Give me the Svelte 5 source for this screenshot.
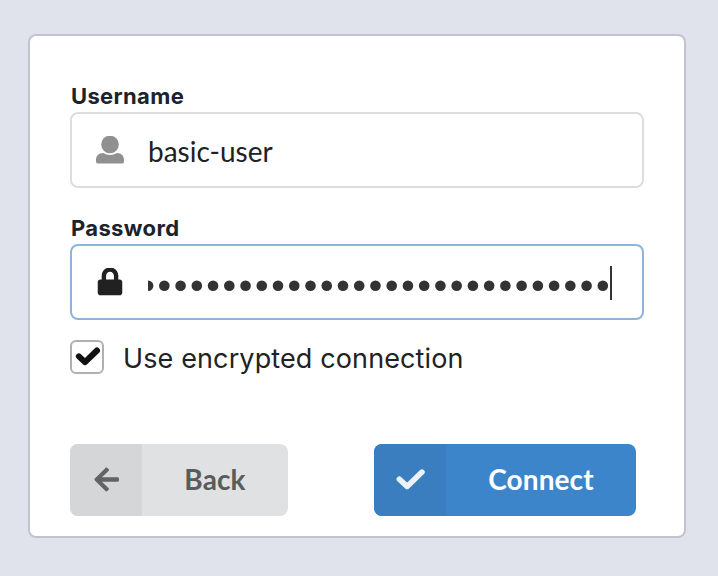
<script>
  const dots = Array.from({ length: 29 }, (_, i) => 0.1 + i * 16.24);
</script>

<main>
  <form class="panel">
    <div class="label"><span>Username</span></div>
    <div class="field">
      <svg class="icon user" viewBox="0 0 28 28" width="28" height="28">
        <circle cx="14" cy="8.5" r="8.8" />
        <path d="M7 17.1Q14 20.8 21 17.1C25.5 17.1 28 20.2 28 24V25.4Q28 27.6 25.8 27.6H2.2Q0 27.6 0 25.4V24C0 20.2 2.5 17.1 7 17.1Z" />
      </svg>
      <span class="value">basic-user</span>
    </div>

    <div class="label second"><span>Password</span></div>
    <div class="field focus">
      <svg class="icon" viewBox="-32 12 512 512" width="28" height="28">
        <path d="M400 224h-24v-72C376 68.2 307.8 0 224 0S72 68.2 72 152v72H48c-26.5 0-48 21.5-48 48v192c0 26.5 21.5 48 48 48h352c26.5 0 48-21.5 48-48V272c0-26.5-21.5-48-48-48zm-104 0H152v-72c0-39.7 32.3-72 72-72s72 32.3 72 72v72z" />
      </svg>
      <svg class="dots" width="462" height="34">
        {#each dots as x}
          <circle cx={x} cy="19.7" r="5.3" />
        {/each}
      </svg>
      <span class="caret"></span>
    </div>

    <div class="check-row">
      <span class="box">
        <svg class="tick" viewBox="0 0 30 30" width="30" height="30">
          <path d="M6.9 14.4L13 20.2L25 8.5" stroke-width="6" />
        </svg>
      </span>
      <span class="check-text">Use encrypted connection</span>
    </div>

    <div class="actions">
      <button type="button" class="back">
        <span class="side">
          <svg viewBox="-45 10 512 512" width="28" height="28">
            <path d="M257.5 445.1l-22.2 22.2c-9.4 9.4-24.6 9.4-33.9 0L7 273c-9.4-9.4-9.4-24.6 0-33.9L201.4 44.7c9.4-9.4 24.6-9.4 33.9 0l22.2 22.2c9.5 9.5 9.3 25-.4 34.3L136.6 216H424c13.3 0 24 10.7 24 24v32c0 13.3-10.7 24-24 24H136.6l120.5 114.8c9.8 9.3 10 24.8.4 34.3z" />
          </svg>
        </span>
        <span class="caption">Back</span>
      </button>
      <button type="button" class="connect">
        <span class="side">
          <svg class="tick" viewBox="0 0 30 30" width="30" height="30">
            <path d="M4.4 14.2L12.1 21.4L27 7.1" stroke-width="5.6" />
          </svg>
        </span>
        <span class="caption">Connect</span>
      </button>
    </div>
  </form>
</main>

<style>
  :global(body) {
    background: #e0e3ec;
  }
  main {
    box-sizing: border-box;
    height: 576px;
    padding: 34px 32px 38px 28px;
    background: #e0e3ec;
  }
  .panel {
    box-sizing: border-box;
    height: 504px;
    padding: 48px 40px 0;
    border: 2px solid #c1c4ce;
    border-radius: 8px;
    background: #fff;
  }
  svg {
    display: block;
    fill: currentColor;
    flex: none;
  }
  .tick {
    fill: none;
    stroke: currentColor;
    stroke-linecap: round;
    stroke-linejoin: round;
  }
  .label {
    height: 28px;
    padding-left: 1px;
    font: 700 22px/25px Inter, sans-serif;
    letter-spacing: 0.35px;
    color: #1b232b;
  }
  .label.second {
    margin-top: 28px;
  }
  .field {
    box-sizing: border-box;
    display: flex;
    align-items: center;
    height: 76px;
    padding-left: 24px;
    border: 2px solid #dcddde;
    border-radius: 8px;
    color: #212121;
  }
  .focus {
    border-color: #8bb6d9;
  }
  .icon {
    margin-right: 24px;
  }
  .user {
    color: #909090;
  }
  .value {
    padding-top: 1px;
    font: 400 28px/34px Lato, sans-serif;
  }
  .dots {
    color: #333;
    margin-top: 2px;
  }
  .caret {
    width: 2px;
    height: 34px;
    margin-top: 2px;
    background: #333;
  }
  .check-row {
    display: flex;
    align-items: center;
    height: 34px;
    margin-top: 20px;
  }
  .box {
    box-sizing: border-box;
    display: flex;
    align-items: center;
    justify-content: center;
    width: 34px;
    height: 34px;
    border: 2px solid #b0b0b0;
    border-radius: 6px;
    color: #111;
  }
  .check-text {
    margin-left: 19px;
    padding-top: 3px;
    font: 400 27px/34px Inter, sans-serif;
    letter-spacing: 0.12px;
    color: #222;
  }
  .actions {
    display: flex;
    justify-content: space-between;
    margin-top: 70px;
    padding-right: 8px;
  }
  button {
    display: flex;
    height: 72px;
    padding: 0;
    border: 0;
    border-radius: 8px;
    overflow: hidden;
    font: 700 28px/70px Lato, sans-serif;
  }
  .back {
    width: 218px;
    background: #e0e1e2;
    color: #5a5b5c;
  }
  .connect {
    width: 262px;
    background: #3c85ca;
    color: #fff;
  }
  .side {
    display: flex;
    align-items: center;
    justify-content: center;
    width: 72px;
    height: 72px;
    background: #d5d6d7;
    color: #636363;
  }
  .connect .side {
    background: #3a7ebf;
    color: #ebf2f9;
  }
  .caption {
    flex: 1;
    text-align: center;
    letter-spacing: 0.1px;
  }
</style>
